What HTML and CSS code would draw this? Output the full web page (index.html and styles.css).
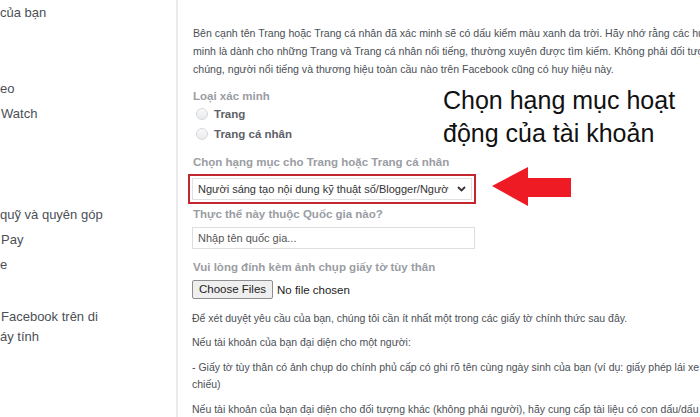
FILE: index.html
```html
<!DOCTYPE html>
<html lang="vi">
<head>
<meta charset="utf-8">
<link rel="stylesheet" href="styles.css">
</head>
<body>
<div class="page">
  <aside class="sidebar">
    <div class="item first">của bạn</div>
    <div class="item gap-lg">eo</div>
    <div class="item ind">Watch</div>
    <div class="item gap-xl">quỹ và quyên góp</div>
    <div class="item ind">Pay</div>
    <div class="item">e</div>
    <div class="item gap-md ind">Facebook trên di</div>
    <div class="item wrap">áy tính</div>
  </aside>
  <main class="main">
    <p class="intro">Bên cạnh tên Trang hoặc Trang cá nhân đã xác minh sẽ có dấu kiểm màu xanh da trời. Hãy nhớ rằng các huy hiệu xác<br>minh là dành cho những Trang và Trang cá nhân nổi tiếng, thường xuyên được tìm kiếm. Không phải đối tượng công<br>chúng, người nổi tiếng và thương hiệu toàn cầu nào trên Facebook cũng có huy hiệu này.</p>

    <div class="label l-type">Loại xác minh</div>
    <div class="radio-row"><span class="radio"></span><span class="radio-text">Trang</span></div>
    <div class="radio-row"><span class="radio"></span><span class="radio-text">Trang cá nhân</span></div>

    <div class="label l-cat">Chọn hạng mục cho Trang hoặc Trang cá nhân</div>
    <div class="highlight">
      <div class="select">
        <span class="select-text">Người sáng tạo nội dung kỹ thuật số/Blogger/Ngườ</span>
        <svg class="chevron" width="9" height="6" viewBox="0 0 9 6"><path d="M1 1 L4.5 4.5 L8 1" fill="none" stroke="#333" stroke-width="1.8"/></svg>
      </div>
    </div>

    <div class="label l-country">Thực thể này thuộc Quốc gia nào?</div>
    <div class="input">Nhập tên quốc gia...</div>

    <div class="label l-attach">Vui lòng đính kèm ảnh chụp giấy tờ tùy thân</div>
    <div class="file-row"><span class="file-btn">Choose Files</span><span class="file-status">No file chosen</span></div>

    <p class="para p1">Để xét duyệt yêu cầu của bạn, chúng tôi cần ít nhất một trong các giấy tờ chính thức sau đây.</p>
    <p class="para p2">Nếu tài khoản của bạn đại diện cho một người:</p>
    <p class="para p3">- Giấy tờ tùy thân có ảnh chụp do chính phủ cấp có ghi rõ tên cùng ngày sinh của bạn (ví dụ: giấy phép lái xe hoặc hộ<br>chiếu)</p>
    <p class="para p4">Nếu tài khoản của bạn đại diện cho đối tượng khác (không phải người), hãy cung cấp tài liệu có con dấu/dấu bưu điện</p>
  </main>

  <div class="callout">Chọn hạng mục hoạt<br>động của tài khoản</div>
  <svg class="arrow" width="80" height="42" viewBox="0 0 80 42"><polygon points="0,20 36,1 36,12 79,12 79,31 36,31 36,40" fill="#ee1b24"/></svg>
</div>
</body>
</html>
```

FILE: styles.css
```css
html, body {
  margin: 0;
  padding: 0;
  background: #fff;
  overflow: hidden;
}
.page {
  position: relative;
  width: 700px;
  height: 417px;
  display: flex;
  overflow: hidden;
  font-family: "Liberation Sans", Arial, sans-serif;
}
.sidebar {
  width: 176px;
  flex: none;
  border-right: 2px solid #ebebeb;
  color: #4b4f56;
  font-size: 13px;
}
.item {
  height: 25px;
  line-height: 25px;
  white-space: nowrap;
}
.item.ind { padding-left: 1px; }
.item.first { margin-top: 0; }
.item.gap-lg { margin-top: 51px; }
.item.gap-xl { margin-top: 76px; }
.item.gap-md { margin-top: 27px; }
.item.wrap { height: 20px; line-height: 20px; margin-top: -2px; }

.main {
  flex: 1;
  padding-left: 15px;
  padding-top: 24px;
  white-space: nowrap;
  min-width: 0;
}
.intro {
  margin: 0;
  font-size: 10.6px;
  line-height: 18px;
  color: #4b4f56;
  width: 560px;
}
.label {
  font-size: 11.5px;
  font-weight: bold;
  color: #9a9da3;
  line-height: 16px;
}
.l-type { margin-top: 10px; }
.radio-row {
  display: flex;
  align-items: center;
  height: 20px;
  padding-left: 3px;
}
.radio {
  width: 10px;
  height: 10px;
  border: 1px solid #d6d8dc;
  border-radius: 50%;
  background: linear-gradient(#fafafa, #e9eaec);
  margin-right: 6px;
}
.radio-text {
  font-size: 11.5px;
  font-weight: bold;
  color: #5e6168;
}
.l-cat { margin-top: 10px; }
.highlight {
  margin-top: 4px;
  margin-left: -5px;
  width: 284px;
  height: 26px;
  border: 2px solid #c3262f;
  display: flex;
  align-items: center;
  justify-content: center;
}
.select {
  width: 280px;
  height: 22px;
  border: 1px solid #e0e0e0;
  box-sizing: border-box;
  display: flex;
  align-items: center;
  padding: 0 5px 0 5px;
  justify-content: space-between;
}
.select-text {
  font-size: 11px;
  color: #333;
}
.chevron { flex: none; }
.l-country { margin-top: 2px; }
.input {
  margin-top: 5px;
  margin-left: -1px;
  width: 283px;
  height: 22px;
  box-sizing: border-box;
  border: 1px solid #dcdee1;
  font-size: 11px;
  color: #555;
  line-height: 20px;
  padding-left: 5px;
}
.l-attach { margin-top: 10px; }
.file-row {
  margin-top: 5px;
  margin-left: -1px;
  display: flex;
  align-items: center;
  height: 19px;
}
.file-btn {
  width: 81px;
  height: 19px;
  box-sizing: border-box;
  border: 1px solid #8e8e8e;
  border-radius: 2px;
  background: #efefef;
  font-size: 11.5px;
  color: #222;
  text-align: center;
  line-height: 17px;
}
.file-status {
  font-size: 11.5px;
  color: #222;
  margin-left: 4px;
}
.para {
  margin: 0;
  font-size: 10.5px;
  color: #4b4f56;
  line-height: 16px;
  margin-left: -1px;
}
.p1 { margin-top: 11px; }
.p2 { margin-top: 8px; }
.p3 { margin-top: 9px; line-height: 17px; }
.p4 { margin-top: 8px; }

.callout {
  position: absolute;
  left: 443px;
  top: 84px;
  font-size: 25px;
  line-height: 33px;
  color: #111;
  white-space: nowrap;
}
.arrow {
  position: absolute;
  left: 492px;
  top: 166px;
}
```
